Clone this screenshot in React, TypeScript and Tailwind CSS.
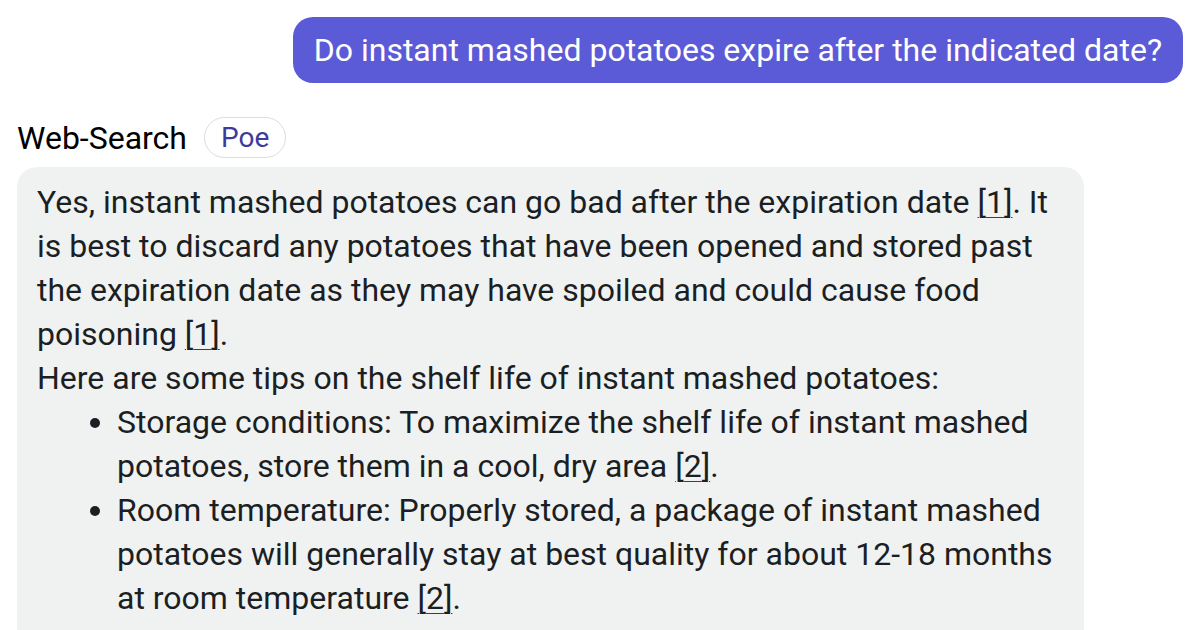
const Cite = ({ n }: { n: number }) => (
  <span className="underline decoration-1 underline-offset-[4px] decoration-[#3a3f44]">[{n}]</span>
);

export default function App() {
  return (
    <div className="w-[1200px] h-[630px] overflow-hidden bg-white font-['Roboto',sans-serif] text-[#1b1f23]">
      {/* user message */}
      <div className="flex justify-end pt-[17px] pr-[17px]">
        <div className="bg-[#5c5bd7] text-white text-[32px] leading-[66px] h-[66px] px-[21px] rounded-[20px] whitespace-nowrap">
          Do instant mashed potatoes expire after the indicated date?
        </div>
      </div>

      {/* bot header */}
      <div className="flex items-center gap-[17px] pl-[17px] mt-[34px]">
        <span className="text-[32px] text-black leading-none">Web-Search</span>
        <span className="border border-[#dcdde0] rounded-full px-[16px] h-[41px] flex items-center text-[28px] text-[#3d3a9c]">
          Poe
        </span>
      </div>

      {/* bot message */}
      <div className="ml-[17px] mt-[9px] w-[1067px] h-[480px] bg-[#f0f2f2] rounded-t-[20px] px-[20px] pt-[13px] text-[32px] leading-[44px]">
        <p>
          Yes, instant mashed potatoes can go bad after the expiration date <Cite n={1} />. It
          is best to discard any potatoes that have been opened and stored past the expiration
          date as they may have spoiled and could cause food poisoning <Cite n={1} />.
        </p>
        <p>Here are some tips on the shelf life of instant mashed potatoes:</p>
        <ul className="list-disc pl-[80px]">
          <li>
            Storage conditions: To maximize the shelf life of instant mashed potatoes, store them
            in a cool, dry area <Cite n={2} />.
          </li>
          <li>
            Room temperature: Properly stored, a package of instant mashed potatoes will generally
            stay at best quality for about 12-18 months at room temperature <Cite n={2} />.
          </li>
        </ul>
      </div>
    </div>
  );
}
